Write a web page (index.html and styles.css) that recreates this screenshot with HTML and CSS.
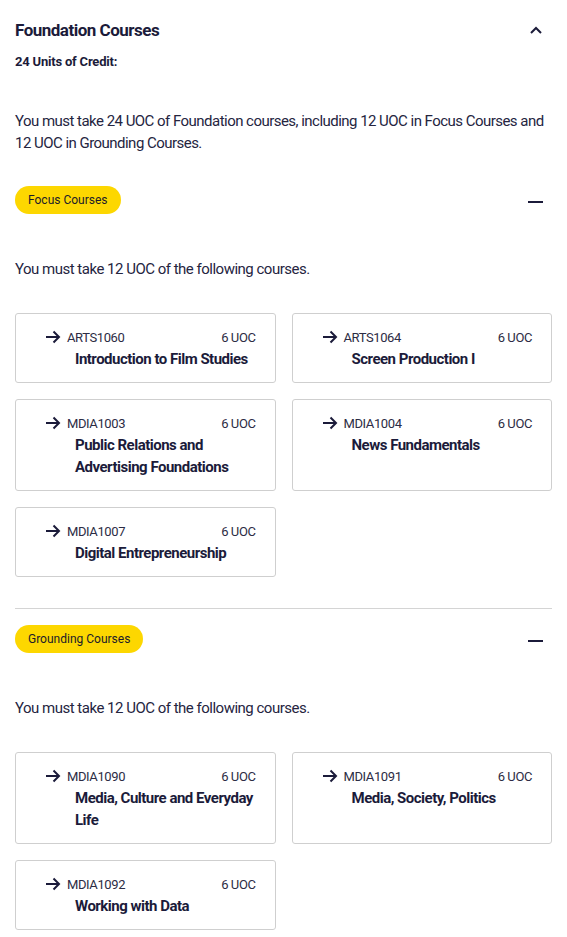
FILE: index.html
```html
<!DOCTYPE html>
<html>
<head>
<meta charset="utf-8">
<link rel="stylesheet" href="styles.css">
</head>
<body>
<section class="section">
  <div class="head">
    <h2 class="title">Foundation Courses</h2>
    <svg class="chev" width="14" height="10" viewBox="0 0 14 10"><path d="M2 8 L7 3 L12 8" fill="none" stroke="#1b1b3a" stroke-width="2"/></svg>
  </div>
  <p class="credit">24 Units of Credit:</p>
  <p class="desc">You must take 24 UOC of Foundation courses, including 12 UOC in Focus Courses and 12 UOC in Grounding Courses.</p>

  <div class="group">
    <div class="ghead">
      <span class="pill">Focus Courses</span>
      <span class="minus"></span>
    </div>
    <p class="gdesc">You must take 12 UOC of the following courses.</p>
    <div class="grid">
      <a class="card"><div class="top"><svg class="arrow" viewBox="0 0 16 14" width="16" height="14"><path d="M1 7 H14 M8.5 1.5 L14 7 L8.5 12.5" fill="none" stroke="#1b1b3a" stroke-width="2"/></svg><span class="code">ARTS1060</span><span class="uoc">6 UOC</span></div><div class="name">Introduction to Film Studies</div></a>
      <a class="card"><div class="top"><svg class="arrow" viewBox="0 0 16 14" width="16" height="14"><path d="M1 7 H14 M8.5 1.5 L14 7 L8.5 12.5" fill="none" stroke="#1b1b3a" stroke-width="2"/></svg><span class="code">ARTS1064</span><span class="uoc">6 UOC</span></div><div class="name">Screen Production I</div></a>
      <a class="card"><div class="top"><svg class="arrow" viewBox="0 0 16 14" width="16" height="14"><path d="M1 7 H14 M8.5 1.5 L14 7 L8.5 12.5" fill="none" stroke="#1b1b3a" stroke-width="2"/></svg><span class="code">MDIA1003</span><span class="uoc">6 UOC</span></div><div class="name">Public Relations and Advertising Foundations</div></a>
      <a class="card"><div class="top"><svg class="arrow" viewBox="0 0 16 14" width="16" height="14"><path d="M1 7 H14 M8.5 1.5 L14 7 L8.5 12.5" fill="none" stroke="#1b1b3a" stroke-width="2"/></svg><span class="code">MDIA1004</span><span class="uoc">6 UOC</span></div><div class="name">News Fundamentals</div></a>
      <a class="card"><div class="top"><svg class="arrow" viewBox="0 0 16 14" width="16" height="14"><path d="M1 7 H14 M8.5 1.5 L14 7 L8.5 12.5" fill="none" stroke="#1b1b3a" stroke-width="2"/></svg><span class="code">MDIA1007</span><span class="uoc">6 UOC</span></div><div class="name">Digital Entrepreneurship</div></a>
    </div>
  </div>

  <div class="group bordered">
    <div class="ghead">
      <span class="pill">Grounding Courses</span>
      <span class="minus"></span>
    </div>
    <p class="gdesc">You must take 12 UOC of the following courses.</p>
    <div class="grid">
      <a class="card"><div class="top"><svg class="arrow" viewBox="0 0 16 14" width="16" height="14"><path d="M1 7 H14 M8.5 1.5 L14 7 L8.5 12.5" fill="none" stroke="#1b1b3a" stroke-width="2"/></svg><span class="code">MDIA1090</span><span class="uoc">6 UOC</span></div><div class="name">Media, Culture and Everyday Life</div></a>
      <a class="card"><div class="top"><svg class="arrow" viewBox="0 0 16 14" width="16" height="14"><path d="M1 7 H14 M8.5 1.5 L14 7 L8.5 12.5" fill="none" stroke="#1b1b3a" stroke-width="2"/></svg><span class="code">MDIA1091</span><span class="uoc">6 UOC</span></div><div class="name">Media, Society, Politics</div></a>
      <a class="card"><div class="top"><svg class="arrow" viewBox="0 0 16 14" width="16" height="14"><path d="M1 7 H14 M8.5 1.5 L14 7 L8.5 12.5" fill="none" stroke="#1b1b3a" stroke-width="2"/></svg><span class="code">MDIA1092</span><span class="uoc">6 UOC</span></div><div class="name">Working with Data</div></a>
    </div>
  </div>
</section>
</body>
</html>
```

FILE: styles.css
```css
* { box-sizing: border-box; }
body {
  margin: 0;
  padding: 0 15px;
  font-family: Roboto, "Liberation Sans", sans-serif;
  color: #1b1b3a;
  background: #fff;
}
.section { padding-top: 19px; }
.head {
  display: flex;
  align-items: center;
  justify-content: space-between;
  height: 22px;
}
.title {
  margin: 0;
  font-size: 17px;
  font-weight: 700;
  line-height: 22px;
  letter-spacing: -0.5px;
}
.chev { margin-right: 9px; }
.credit {
  margin: 12px 0 0;
  font-size: 13px;
  font-weight: 700;
  line-height: 18px;
  letter-spacing: -0.2px;
}
.desc {
  margin: 39px 0 0;
  font-size: 15px;
  line-height: 22px;
  color: #25253f;
  letter-spacing: -0.53px;
}
.group { padding-top: 32px; }
.group.bordered {
  margin-top: 31px;
  border-top: 1px solid #d4d4d4;
  padding-top: 16px;
}
.ghead {
  display: flex;
  align-items: center;
  justify-content: space-between;
  height: 28px;
}
.pill {
  background: #fdd700;
  border-radius: 14px;
  font-size: 12px;
  line-height: 28px;
  padding: 0 13px;
  color: #1b1b2a;
}
.minus {
  width: 15px;
  height: 2px;
  background: #1b1b3a;
  margin-right: 9px;
  margin-top: 4px;
}
.gdesc {
  margin: 44px 0 0;
  font-size: 15px;
  line-height: 22px;
  color: #25253f;
  letter-spacing: -0.5px;
}
.grid {
  margin-top: 33px;
  display: grid;
  grid-template-columns: 1fr 1fr;
  gap: 16px;
}
.card {
  border: 1px solid #cfcfcf;
  border-radius: 3px;
  padding: 14px 19px 12px 29px;
  display: block;
}
.top {
  display: flex;
  align-items: center;
  height: 18px;
  font-size: 13px;
  letter-spacing: -0.4px;
}
.arrow { margin-right: 6px; flex: none; }
.code { color: #2c2c44; }
.uoc { margin-left: auto; color: #2c2c44; }
.name {
  padding-left: 30px;
  margin-top: 2px;
  margin-right: -4px;
  font-size: 15px;
  font-weight: 700;
  line-height: 22px;
  letter-spacing: -0.5px;
}
```
